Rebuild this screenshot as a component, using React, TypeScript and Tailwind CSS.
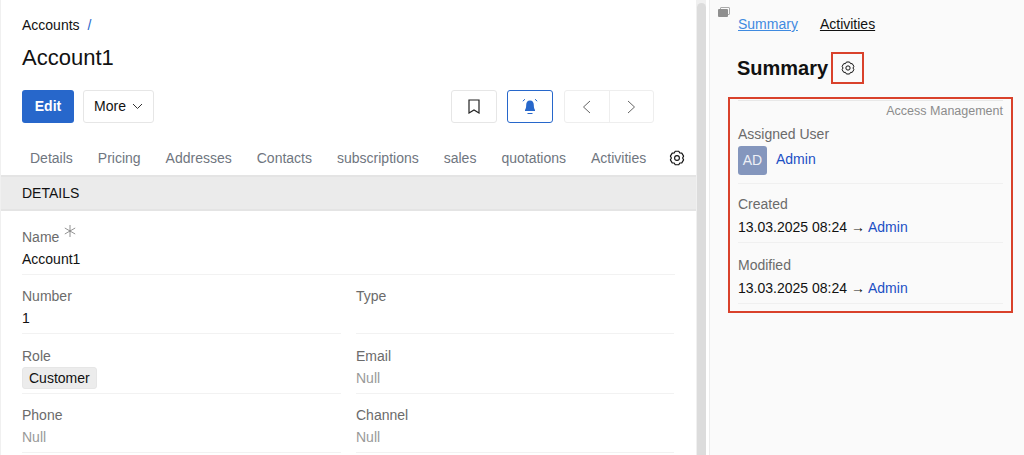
import React from "react";

const Gear = ({ size }: { size: number }) => (
  <svg width={size} height={size} viewBox="0 0 24 24" fill="none" stroke="#111" strokeWidth={1.5} strokeLinejoin="round">
    <path d="M9.6 3h4.8l1.3 2.4 2.7.1 2.4 4-1.3 2.5 1.3 2.5-2.4 4-2.7.1L14.400 21H9.600l-1.300-2.400-2.700-.1-2.400-4L4.500 12 3.200 9.500l2.400-4 2.700-.1z" />
    <circle cx="12" cy="12" r="3.200" />
  </svg>
);

const Field = ({ label, children, star }: { label: string; children?: React.ReactNode; star?: boolean }) => (
  <div className="h-[59.5px] border-b border-[#f2f2f2] flex flex-col pt-[10.500px]">
    <div className="flex items-start h-[22px] leading-[22px] text-[#6b6b6b]">
      {label}
      {star && (
        <svg width="12" height="12" viewBox="0 0 12 12" stroke="#777" strokeWidth="0.8" className="ml-[5px] -mt-[1px]">
          <path d="M6 0v12M0.800 3l10.400 6M0.800 9l10.400-6" />
        </svg>
      )}
    </div>
    <div className="h-[22px] leading-[22px]">{children}</div>
  </div>
);

const Null = () => <span className="text-[#999]">Null</span>;

export default function App() {
  return (
    <div className="h-[455px] w-[1024px] overflow-hidden flex bg-[#f0f0f0] text-[14px] text-[#111] font-['Liberation_Sans',Arial,sans-serif]">
      <main className="ml-px w-[695px] bg-white shrink-0">
        <div className="px-[21px] pt-[16px]">
          <div className="h-[18px] leading-[18px] flex">
            <span>Accounts</span>
            <span className="ml-[8px] text-[#2a66c9]">/</span>
          </div>
          <h1 className="mt-[11px] h-[26px] leading-[26px] text-[22px]">Account1</h1>
          <div className="mt-[19px] flex h-[33px] pr-[21px]">
            <button className="w-[52px] rounded-[3px] bg-[#2767cb] text-white font-bold">Edit</button>
            <button className="ml-[9px] w-[71px] rounded-[3px] border border-[#e6e6e6] flex items-center justify-center gap-[6px]">
              More
              <svg width="11" height="7" viewBox="0 0 11 7" fill="none" stroke="#333"><path d="M1 1l4.500 4.500L10 1" /></svg>
            </button>
            <div className="flex-1" />
            <button className="w-[46px] rounded-[3px] border border-[#e6e6e6] flex items-center justify-center">
              <svg width="12" height="15" viewBox="0 0 12 15" fill="none" stroke="#222" strokeWidth="1.200"><path d="M1 1h10v13L6 11l-5 3z" /></svg>
            </button>
            <button className="ml-[10px] w-[46px] rounded-[3px] border border-[#2767cb] flex items-center justify-center">
              <svg width="16" height="17" viewBox="0 0 16 17" fill="#2767cb">
                <path d="M8 2.500c-2.600 0-3.800 2-3.800 4.400 0 2.300-.5 3.700-1.200 5v1h10v-1c-.7-1.300-1.200-2.700-1.200-5 0-2.400-1.200-4.400-3.800-4.400z" />
                <path d="M5.500 15h5v1h-5z" />
                <path d="M.8 3.200 3 1.200M15.200 3.200 13 1.200" stroke="#2767cb" strokeWidth="1" fill="none" />
              </svg>
            </button>
            <div className="ml-[11px] w-[90px] rounded-[3px] border border-[#eeeeee] flex">
              <div className="flex-1 flex items-center justify-center border-r border-[#eeeeee]">
                <svg width="9" height="14" viewBox="0 0 9 14" fill="none" stroke="#666"><path d="M8 1 1.500 7 8 13" /></svg>
              </div>
              <div className="flex-1 flex items-center justify-center">
                <svg width="9" height="14" viewBox="0 0 9 14" fill="none" stroke="#666"><path d="M1 1l6.500 6L1 13" /></svg>
              </div>
            </div>
          </div>
          <nav className="mt-[24px] h-[22px] leading-[22px] flex items-center pl-[8px] text-[#6f7680]">
            <span>Details</span>
            <span className="ml-[25px]">Pricing</span>
            <span className="ml-[25px]">Addresses</span>
            <span className="ml-[25px]">Contacts</span>
            <span className="ml-[25px]">subscriptions</span>
            <span className="ml-[25px]">sales</span>
            <span className="ml-[25px]">quotations</span>
            <span className="ml-[25px]">Activities</span>
            <span className="ml-[22px] flex"><Gear size={18} /></span>
          </nav>
        </div>
        <div className="mt-[6px] h-[36px] bg-[#ebebeb] border-y-2 border-[#e4e4e4] leading-[32px] px-[21px]">DETAILS</div>
        <div className="px-[21px] pr-[21px]">
          <div className="pt-[5px]">
            <div className="-mt-[1px]">
              <Field label="Name" star>Account1</Field>
            </div>
          </div>
          <div className="grid grid-cols-[319px_318px] gap-x-[15px]">
            <Field label="Number">1</Field>
            <Field label="Type" />
            <Field label="Role">
              <span className="inline-block h-[22px] leading-[20px] px-[6px] rounded-[3px] bg-[#ececec] border border-[#e6e6e6]">Customer</span>
            </Field>
            <Field label="Email"><Null /></Field>
            <Field label="Phone"><Null /></Field>
            <Field label="Channel"><Null /></Field>
          </div>
        </div>
      </main>
      <div className="ml-[1px] mt-[3px] w-[9px] h-[500px] rounded-t-[5px] bg-[#dcdcdc] shrink-0" />
      <div className="w-[3px] bg-white shrink-0" />
      <aside className="flex-1 relative bg-[#fafafa] border-l border-[#ececec] pl-[28px]">
        <div className="absolute left-[8px] top-[7px] w-[12px] h-[10px]">
          <div className="absolute right-0 top-0 w-[10px] h-[8px] border border-[#aaa] rounded-[1px]" />
          <div className="absolute left-0 bottom-0 w-[10px] h-[8px] bg-[#8f8f8f] rounded-[1px]" />
        </div>
        <div className="pt-[15px] h-[33px] leading-[18px] flex">
          <a className="text-[#3f8ae0] underline">Summary</a>
          <a className="ml-[22px] underline">Activities</a>
        </div>
        <div className="mt-[19px] -ml-[1px] flex items-center h-[32px]">
          <span className="text-[20px] font-bold">Summary</span>
          <div className="ml-[3px] w-[33px] h-[32px] border-2 border-[#d9412b] flex items-center justify-center">
            <Gear size={16} />
          </div>
        </div>
        <section className="mt-[13px] -ml-[10px] w-[285px] h-[216px] border-2 border-[#d9412b] px-[8px]">
          <div className="border-t border-[#e8e8e8] mt-[1px] h-[16px] leading-[16px] pt-[2px] text-right text-[12.500px] text-[#8c8c8c] box-content">Access Management</div>
          <div className="mt-[5px] h-[20px] leading-[20px] text-[#6b6b6b]">Assigned User</div>
          <div className="mt-[2px] h-[38px] border-b border-[#f0f0f0] flex">
            <div className="w-[29px] h-[29px] rounded-[3px] bg-[#8496bd] text-[#eef0f6] flex items-center justify-center">AD</div>
            <a className="ml-[9px] h-[29px] leading-[27px] text-[#1b4fc4]">Admin</a>
          </div>
          <div className="mt-[10px] h-[20px] leading-[20px] text-[#6b6b6b]">Created</div>
          <div className="mt-[2px] h-[27px] leading-[22px] border-b border-[#f0f0f0]">13.03.2025 08:24 → <a className="text-[#1b4fc4]">Admin</a></div>
          <div className="mt-[12px] h-[20px] leading-[20px] text-[#6b6b6b]">Modified</div>
          <div className="mt-[2px] h-[27px] leading-[22px] border-b border-[#f0f0f0]">13.03.2025 08:24 → <a className="text-[#1b4fc4]">Admin</a></div>
        </section>
      </aside>
    </div>
  );
}
